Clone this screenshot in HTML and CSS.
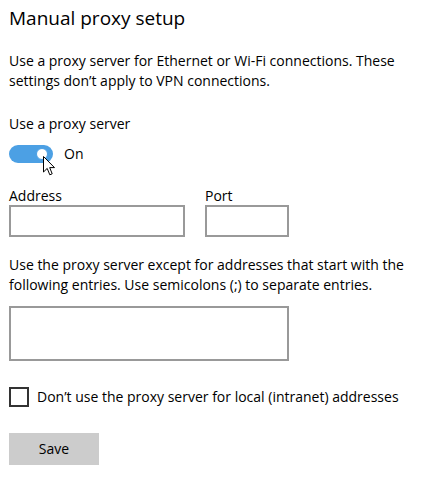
FILE: index.html
```html
<!DOCTYPE html>
<html lang="en">
<head>
<meta charset="utf-8">
<title>Manual proxy setup</title>
<link rel="stylesheet" href="styles.css">
</head>
<body>
<main class="page">
  <h1 class="title">Manual proxy setup</h1>
  <p class="desc">Use a proxy server for Ethernet or Wi-Fi connections. These settings don’t apply to VPN connections.</p>
  <div class="label">Use a proxy server</div>
  <div class="toggle-row">
    <span class="toggle">
      <span class="knob"></span>
      <svg class="cursor" width="13" height="20" viewBox="0 0 13 20"><path d="M0.5 0.5 L0.5 16 L4.2 12.4 L6.8 18.8 L9.2 17.8 L6.7 11.6 L11.5 11.6 Z" fill="#fff" stroke="#000" stroke-width="1" stroke-linejoin="miter"/></svg>
    </span>
    <span class="toggle-text">On</span>
  </div>
  <div class="fields">
    <div class="field">
      <div class="field-label">Address</div>
      <div class="input input-address"></div>
    </div>
    <div class="field">
      <div class="field-label">Port</div>
      <div class="input input-port"></div>
    </div>
  </div>
  <p class="desc desc2">Use the proxy server except for addresses that start with the following entries. Use semicolons (;) to separate entries.</p>
  <div class="textarea"></div>
  <label class="check-row">
    <span class="checkbox"></span>
    <span class="check-text">Don’t use the proxy server for local (intranet) addresses</span>
  </label>
  <div class="button">Save</div>
</main>
</body>
</html>
```

FILE: styles.css
```css
html, body {
  margin: 0;
  padding: 0;
  background: #fff;
}
body {
  font-family: "Open Sans", "Noto Sans", "Liberation Sans", sans-serif;
  color: #000;
  font-size: 14px;
}
.page {
  padding: 4px 0 0 9px;
  width: 410px;
}
.title {
  margin: 0;
  font-size: 19px;
  font-weight: 400;
  line-height: 28px;
}
.desc {
  margin: 19px 0 0 0;
  font-size: 14px;
  line-height: 20px;
  width: 405px;
}
.label {
  margin-top: 23px;
  line-height: 20px;
}
.toggle-row {
  display: flex;
  align-items: center;
  margin-top: 11px;
  height: 18px;
}
.toggle {
  position: relative;
  display: block;
  width: 44px;
  height: 18px;
  border-radius: 9px;
  background: #4ca0e4;
}
.knob {
  position: absolute;
  left: 27px;
  top: 3px;
  width: 10px;
  height: 10px;
  border-radius: 50%;
  background: #fff;
  border: 1px solid #4ca0e4;
  box-sizing: content-box;
}
.cursor {
  position: absolute;
  left: 34px;
  top: 11px;
}
.toggle-text {
  margin-left: 11px;
  line-height: 20px;
}
.fields {
  display: flex;
  gap: 20px;
  margin-top: 24px;
}
.field-label {
  line-height: 18px;
}
.input {
  box-sizing: border-box;
  height: 32px;
  border: 2px solid #999;
  background: #fff;
}
.input-address {
  width: 176px;
}
.input-port {
  width: 84px;
}
.desc2 {
  margin-top: 18px;
}
.textarea {
  box-sizing: border-box;
  margin-top: 11px;
  width: 280px;
  height: 55px;
  border: 2px solid #999;
}
.check-row {
  display: flex;
  align-items: center;
  margin-top: 26px;
  height: 20px;
}
.checkbox {
  box-sizing: border-box;
  width: 20px;
  height: 20px;
  border: 2px solid #333;
}
.check-text {
  margin-left: 8px;
  line-height: 20px;
}
.button {
  margin-top: 26px;
  width: 90px;
  height: 32px;
  background: #ccc;
  display: flex;
  align-items: center;
  justify-content: center;
  line-height: 20px;
}
```
